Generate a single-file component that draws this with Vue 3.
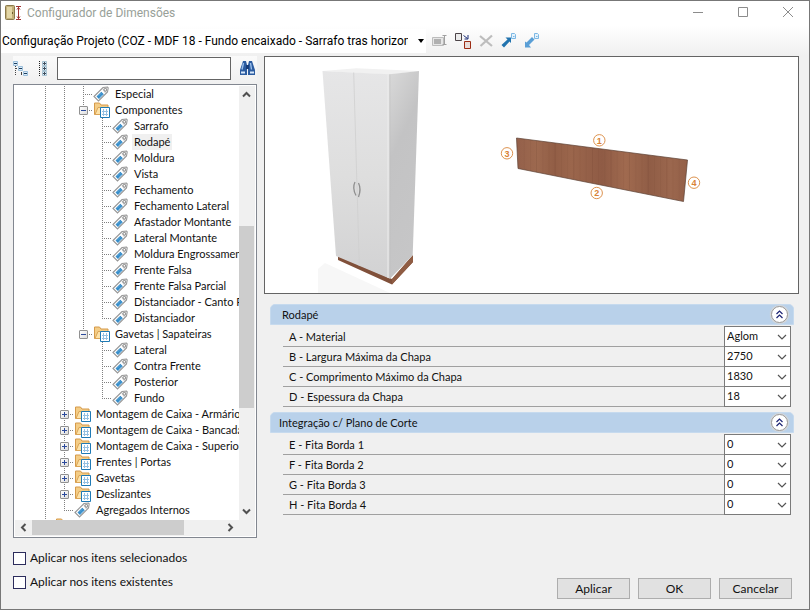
<template>
    <div class="window">
        <svg class="defs" aria-hidden="true">
            <symbol id="i-tag" viewBox="0 0 17 16">
                <path d="M1 10.500 10 1.500 14.500 1 15.200 1.800 14.500 6 5.500 15Z" fill="#fff" stroke="#969696" stroke-width="1.100" />
                <path d="M9.500 3.500 11 2.200 14 2 14 5 12 7.300Z" fill="#c9c9c9" />
                <path d="M3.500 10.500 8.300 5.700 10.800 8.200 6 13Z" fill="#2f86c4" />
                <path d="M5 10.500 8.500 7M6.300 11.500 9.600 8.300" stroke="#69b2e2" stroke-width=".8" />
                <circle cx="12.300" cy="3.800" r="1.300" fill="#fff" stroke="#777" stroke-width=".8" />
            </symbol>
            <symbol id="i-folder" viewBox="-1 0 17 16">
                <path d="M.5 12.500V1h5l1.500 2h7v9.500Z" fill="#f4cd86" stroke="#d59a4a" />
                <path d="M1 12.500 4 5.500h11l-2 7Z" fill="#fde2a8" stroke="#dba557" />
                <path d="M6.500 5.500h9v10h-9z" fill="#fff" stroke="#1f7ab5" />
                <path d="M9.500 7v7M12.500 7v7M8 9.500h6M8 12.500h6" stroke="#94c0e2" />
            </symbol>
        </svg>

        <header class="titlebar">
            <svg width="17" height="17" viewBox="0 0 17 17">
                <rect x=".5" y=".5" width="9" height="14" rx="1" fill="#c4b07a" stroke="#8b7a4c" />
                <path d="M2 2h5v11H2z" fill="#e3d6a6" />
                <path d="M7.500 7v2" stroke="#6e5c30" />
                <path d="M11 1.500h5M11 14.500h5M13.500 2v12M12 4.500 13.500 2.500 15 4.500M12 11.500l1.500 2 1.500-2" fill="none" stroke="#a03434" />
            </svg>
            <h1>Configurador de Dimensões</h1>
            <div class="win-buttons">
                <button type="button" aria-label="Minimizar"><svg width="12" height="12" viewBox="0 0 12 12"><path d="M1 5.500h10" /></svg></button>
                <button type="button" aria-label="Maximizar"><svg width="12" height="12" viewBox="0 0 12 12"><path d="M1.500.500h9v9h-9z" /></svg></button>
                <button type="button" aria-label="Fechar"><svg width="12" height="12" viewBox="0 0 12 12"><path d="m1 0 10 10M11 0 1 10" /></svg></button>
            </div>
        </header>

        <div class="toolbar">
            <div class="project">
                <select v-model="project" aria-label="Configuração">
                    <option>Configuração Projeto (COZ - MDF 18 - Fundo encaixado - Sarrafo tras horizontal)</option>
                </select>
                <svg width="7" height="4" viewBox="0 0 7 4"><path d="M0 0h6L3 4Z" /></svg>
            </div>
            <button type="button" aria-label="Renomear" disabled>
                <svg width="17" height="16" viewBox="0 0 17 16">
                    <path d="M.5 4.500h11v8H.5z" fill="#e6e6e6" stroke="#bcbcbc" />
                    <path d="M2 6h7v5H2z" fill="#b0b0b0" />
                    <path d="M10.500 2.500h4M10.500 11.500h4M12.500 3v8" stroke="#a0a0a0" />
                </svg>
            </button>
            <button type="button" aria-label="Substituir">
                <svg width="17" height="16" viewBox="0 0 17 16">
                    <path d="M.5.500h6v7h-6z" fill="#ebebeb" stroke="#4c4448" />
                    <path d="M9.500 8.500h6v7h-6z" fill="#e8dcd8" stroke="#9c2c14" />
                    <path d="M8.500 2.500l4 3M13 2v4H9.500" fill="none" stroke="#1c2f78" />
                </svg>
            </button>
            <button type="button" aria-label="Excluir" disabled>
                <svg width="17" height="16" viewBox="0 0 17 16">
                    <path d="M2 3 14 13M14 2.500 2.500 13" stroke="#bdbdbd" stroke-width="2.200" />
                </svg>
            </button>
            <button type="button" aria-label="Exportar">
                <svg width="17" height="16" viewBox="0 0 17 16">
                    <path d="M10.500.500h3l1 1v4h-4z" fill="#e4f2fc" stroke="#7db8e4" />
                    <path d="M12 3.500h1.500" stroke="#7db8e4" />
                    <path d="M4.500 4.500H10v5.500L8.500 8.500l-5.500 6L.5 12 6.500 6.500Z" fill="#2173ae" />
                </svg>
            </button>
            <button type="button" aria-label="Importar">
                <svg width="17" height="16" viewBox="0 0 17 16">
                    <path d="M10.500.500h3l1 1v4h-4z" fill="#e4f2fc" stroke="#7db8e4" />
                    <path d="M12 3.500h1.500" stroke="#7db8e4" />
                    <path d="M1 14.500V8.500l1.500 1L8 4l2.500 2.500L5 12l2 2.500Z" fill="#5a9fd6" />
                </svg>
            </button>
        </div>

        <main class="body">
            <section class="left">
                <div class="search">
                    <button type="button" aria-label="Recolher tudo">
                        <svg width="16" height="16" viewBox="0 0 16 16" fill="none">
                            <path d="M2.500 5v10M8.500 9v6" stroke="#444" stroke-dasharray="1 1" />
                            <path d="M3 7.500h3M8 12.500h3" stroke="#444" stroke-dasharray="1 1" />
                            <path d="M.5.500h4v4h-4zM5.500 5.500h4v4h-4zM10.500 10.500h4v4h-4z" fill="#dcecf8" stroke="#9cc0dc" />
                            <path d="M1 2.500h3M6 7.500h3M11 12.500h3" stroke="#1c3c5c" />
                        </svg>
                    </button>
                    <button type="button" aria-label="Expandir tudo">
                        <svg width="10" height="16" viewBox="0 0 10 16" fill="none">
                            <path d="M1.500 0v16" stroke="#222" stroke-dasharray="1 1" />
                            <path d="M4.500.500h4v4h-4zM4.500 5.500h4v4h-4zM4.500 10.500h4v4h-4z" fill="#e4f0f8" stroke="#a4c0d0" />
                            <path d="M5 2.500h3M5 7.500h3M5 12.500h3M6.500 1v3M6.500 6v3M6.500 11v3" stroke="#3c4c5c" />
                        </svg>
                    </button>
                    <input v-model="query" type="text" aria-label="Localizar" />
                    <button type="button" aria-label="Buscar">
                        <svg width="16" height="15" viewBox="0 0 16 15">
                            <path d="M3 0h3l1 4v10H0V9ZM9 0h3l3 9v5H8V4Z" fill="#2c5ca0" />
                            <path d="M6 4h3v4H6z" fill="#183c78" />
                            <path d="M3.500 2 2 8.500M10.500 2l1 6.500" stroke="#9cc0ec" stroke-width="1.400" />
                            <path d="M1 11.500h4M10 11.500h4" stroke="#d8e8fa" stroke-width="2" />
                        </svg>
                    </button>
                </div>

                <div class="tree">
                    <ul class="nodes">
                        <li v-for="node in nodes" :key="node.id" class="node">
                            <span v-for="(guide, g) in node.guides" :key="g" class="guide" :class="guide">
                                <button v-if="node.toggle && g === node.guides.length - 1" type="button" class="toggle" :aria-label="node.label">
                                    <svg width="7" height="7" viewBox="0 0 7 7">
                                        <path d="M1 3.500h5" /><path v-if="node.toggle === '+'" d="M3.500 1v5" />
                                    </svg>
                                </button>
                            </span>
                            <svg class="icon" width="17" height="16"><use :href="node.folder ? '#i-folder' : '#i-tag'" width="17" height="16" /></svg>
                            <span class="label" :class="{ selected: node.label === selected }" @click="selected = node.label">{{ node.label }}</span>
                        </li>
                    </ul>
                    <div class="vbar">
                        <button type="button" aria-label="Acima"><svg width="9" height="7" viewBox="0 0 9 7"><path d="m1 5.500 3.500-3.500L8 5.500" /></svg></button>
                        <div class="track"><span class="thumb"></span></div>
                        <button type="button" aria-label="Abaixo"><svg width="9" height="7" viewBox="0 0 9 7"><path d="m1 1.500 3.500 3.500L8 1.500" /></svg></button>
                    </div>
                    <div class="hbar">
                        <button type="button" aria-label="Esquerda"><svg width="7" height="9" viewBox="0 0 7 9"><path d="M5.500 1 2 4.500 5.500 8" /></svg></button>
                        <div class="track"><span class="thumb"></span></div>
                        <button type="button" aria-label="Direita"><svg width="7" height="9" viewBox="0 0 7 9"><path d="M1.500 1 5 4.500 1.500 8" /></svg></button>
                    </div>
                </div>
            </section>

            <section class="right">
                <div class="preview">
                    <svg viewBox="265 57 533 236" role="img" aria-label="Armário com rodapé">
                        <defs>
                            <linearGradient id="front" x1="0" y1="0" x2="0" y2="1">
                                <stop offset="0" stop-color="#e6e6e7" />
                                <stop offset=".5" stop-color="#dedede" />
                                <stop offset="1" stop-color="#d2d2d3" />
                            </linearGradient>
                            <linearGradient id="side" x1="0" y1="0" x2=".3" y2="1">
                                <stop offset="0" stop-color="#d9d9d9" />
                                <stop offset=".4" stop-color="#c3c3c4" />
                                <stop offset="1" stop-color="#c6c6c7" />
                            </linearGradient>
                            <linearGradient id="wood" x1="0" y1="0" x2="1" y2="0">
                                <stop offset="0" stop-color="#94604a" />
                                <stop offset=".12" stop-color="#9d694f" />
                                <stop offset=".22" stop-color="#925e46" />
                                <stop offset=".32" stop-color="#9b664c" />
                                <stop offset=".5" stop-color="#8f5b45" />
                                <stop offset=".64" stop-color="#a06a4f" />
                                <stop offset=".78" stop-color="#905d46" />
                                <stop offset=".9" stop-color="#9b674e" />
                                <stop offset="1" stop-color="#946048" />
                            </linearGradient>
                        </defs>
                        <path d="m318 269 7-6 65 30h-72z" fill="#f7f7f7" />
                        <path d="m338 256 54 23 21-24v7l-21 22.500L338 260z" fill="#80503a" />
                        <path d="m392 279 21-24v7l-21 22.500z" fill="#8f5c43" />
                        <path d="m322.500 71 34-2.700 62.500 2.700-29.500 3.500z" fill="#f1f1f1" />
                        <path d="M322.500 71 389.500 74.300 390 278.700 336 256z" fill="url(#front)" />
                        <path d="M389.500 74.300 419 71 412.700 255.300 390 278.700z" fill="url(#side)" />
                        <path d="m353.700 72.500 5.600 193.500" stroke="#cfcfcf" stroke-width=".8" />
                        <path d="M388 74.300V278" stroke="#ececec" />
                        <path d="M389.800 74.300V278" stroke="#bdbdbd" stroke-width=".7" />
                        <path d="M355 182q-3 6 1 13.500M358.500 183q3 6 0 14" fill="none" stroke="#8f8f8f" stroke-width="1.300" />
                        <path d="M516.500 138 687.500 160 683.500 201.500 518 168.500z" fill="url(#wood)" stroke="#5c4034" stroke-width=".7" />
                        <path
                            v-for="n in 26" :key="n"
                            :d="`M${518 + n * 6.2} ${138.8 + n * 0.8}v${30 + n * 0.36}`"
                            stroke="#5f3524" stroke-width=".8" :opacity="n % 3 ? 0.08 : 0.18"
                        />
                        <g v-for="edge in edges" :key="edge.n">
                            <circle :cx="edge.x" :cy="edge.y" r="5.700" fill="#fff" stroke="#dd9350" />
                            <text :x="edge.x" :y="edge.y + 3.2" class="edge">{{ edge.n }}</text>
                        </g>
                    </svg>
                </div>

                <div class="groups">
                    <section v-for="group in groups" :key="group.title" class="group">
                        <h2 :class="{ main: group.main }">
                            {{ group.title }}
                            <button type="button" class="collapse" :aria-label="group.title">
                                <svg width="9" height="9" viewBox="0 0 9 9"><path d="m1.500 4 3-3 3 3M1.500 8l3-3 3 3" /></svg>
                            </button>
                        </h2>
                        <div v-for="field in group.fields" :key="field.id" class="field">
                            <label :for="field.id">{{ field.label }}</label>
                            <div class="combo">
                                <select :id="field.id" v-model="field.value">
                                    <option>{{ field.value }}</option>
                                </select>
                                <svg width="10" height="6" viewBox="0 0 10 6"><path d="m1 1 4 4 4-4" /></svg>
                            </div>
                        </div>
                    </section>
                </div>
            </section>
        </main>

        <footer class="footer">
            <div class="checks">
                <label><input v-model="applySelected" type="checkbox" />Aplicar nos itens selecionados</label>
                <label><input v-model="applyExisting" type="checkbox" />Aplicar nos itens existentes</label>
            </div>
            <div class="actions">
                <button type="button">Aplicar</button>
                <button type="button">OK</button>
                <button type="button">Cancelar</button>
            </div>
        </footer>
    </div>
</template>

<script setup>
import { ref, reactive } from "vue";

const project = ref("Configuração Projeto (COZ - MDF 18 - Fundo encaixado - Sarrafo tras horizontal)");
const query = ref("");
const selected = ref("Rodapé");
const applySelected = ref(false);
const applyExisting = ref(false);

const leaf = (label, guides) => ({ label, guides });
const folder = (label, guides, toggle) => ({ label, guides, toggle, folder: true });

// guides: v = vertical line, t = tee, e = elbow, n = empty
const nodes = [
    leaf("Especial", "vvt"),
    folder("Componentes", "vvt", "-"),
    leaf("Sarrafo", "vvvt"),
    leaf("Rodapé", "vvvt"),
    leaf("Moldura", "vvvt"),
    leaf("Vista", "vvvt"),
    leaf("Fechamento", "vvvt"),
    leaf("Fechamento Lateral", "vvvt"),
    leaf("Afastador Montante", "vvvt"),
    leaf("Lateral Montante", "vvvt"),
    leaf("Moldura Engrossamento", "vvvt"),
    leaf("Frente Falsa", "vvvt"),
    leaf("Frente Falsa Parcial", "vvvt"),
    leaf("Distanciador - Canto Reto", "vvvt"),
    leaf("Distanciador", "vvve"),
    folder("Gavetas | Sapateiras", "vve", "-"),
    leaf("Lateral", "vvnt"),
    leaf("Contra Frente", "vvnt"),
    leaf("Posterior", "vvnt"),
    leaf("Fundo", "vvne"),
    folder("Montagem de Caixa - Armários", "vt", "+"),
    folder("Montagem de Caixa - Bancadas", "vt", "+"),
    folder("Montagem de Caixa - Superior", "vt", "+"),
    folder("Frentes | Portas", "vt", "+"),
    folder("Gavetas", "vt", "+"),
    folder("Deslizantes", "vt", "+"),
    leaf("Agregados Internos", "ve"),
    folder("", "t"),
].map((node, id) => ({ ...node, id, guides: node.guides.split("") }));

const edges = [
    { n: 1, x: 599.3, y: 140.3 },
    { n: 2, x: 596.7, y: 193 },
    { n: 3, x: 507, y: 153.3 },
    { n: 4, x: 694, y: 182.7 },
];

const groups = reactive([
    {
        title: "Rodapé",
        main: true,
        fields: [
            { id: "a", label: "A - Material", value: "Aglom" },
            { id: "b", label: "B - Largura Máxima da Chapa", value: "2750" },
            { id: "c", label: "C - Comprimento Máximo da Chapa", value: "1830" },
            { id: "d", label: "D - Espessura da Chapa", value: "18" },
        ],
    },
    {
        title: "Integração c/ Plano de Corte",
        fields: [
            { id: "e", label: "E - Fita Borda 1", value: "0" },
            { id: "f", label: "F - Fita Borda 2", value: "0" },
            { id: "g", label: "G - Fita Borda 3", value: "0" },
            { id: "h", label: "H - Fita Borda 4", value: "0" },
        ],
    },
]);
</script>

<style>
body {
    margin: 0;
}
</style>

<style scoped>
.window {
    display: flex;
    flex-direction: column;
    box-sizing: border-box;
    height: 100vh;
    border: 1px solid #777;
    background: #f0f0f0;
    color: #111;
    font: 11px/16px "Lato", "Liberation Sans", sans-serif;
}

.window * {
    box-sizing: border-box;
}

.defs {
    position: absolute;
    width: 0;
    height: 0;
}

button,
input,
select {
    margin: 0;
    padding: 0;
    border: 0;
    background: none;
    color: inherit;
    font: inherit;
}

button {
    display: flex;
    align-items: center;
    justify-content: center;
}

svg {
    display: block;
    flex: none;
}

select {
    appearance: none;
    width: 100%;
}

.titlebar {
    display: flex;
    align-items: center;
    gap: 5px;
    height: 24px;
    padding-left: 4px;
    background: #fff;
}

.titlebar h1 {
    flex: 1;
    margin: 0;
    color: #98a098;
    font: 12px/16px "Roboto", "Open Sans", sans-serif;
}

.win-buttons {
    display: flex;
}

.win-buttons button {
    width: 45px;
    height: 24px;
    padding-left: 3px;
}

.win-buttons path {
    fill: none;
    stroke: #8c8c8c;
}

.toolbar {
    display: flex;
    align-items: center;
    gap: 6px;
    height: 31px;
    background: linear-gradient(#fff, #f0f0f0);
}

.project {
    position: relative;
    width: 425px;
    height: 24px;
    padding-right: 18px;
    background: #fff;
}

.project select {
    height: 24px;
    padding-left: 1px;
    overflow: hidden;
    font: 12px/24px "Roboto", "Open Sans", sans-serif;
    color: #000;
    text-overflow: clip;
}

.project svg {
    position: absolute;
    top: 10px;
    right: 1px;
}

.body {
    display: flex;
    flex: 1;
    min-height: 0;
    padding: 0 10px 0 12px;
    gap: 7px;
}

.left {
    display: flex;
    flex-direction: column;
    width: 244px;
}

.search {
    display: flex;
    align-items: center;
    gap: 9px;
    height: 28px;
    padding: 0 1px 3px 0;
    background: linear-gradient(#fafafa, #f0f0f0);
}

.search input {
    flex: 1;
    min-width: 0;
    height: 23px;
    padding: 0 4px;
    border: 1px solid #646464;
    background: #fff;
}

.tree {
    display: grid;
    flex: 1;
    grid-template-columns: minmax(0, 1fr) 16px;
    grid-template-rows: minmax(0, 1fr) 16px;
    min-height: 0;
    padding: 1px;
    border: 1px solid #828790;
    background: #f0f0f0;
    box-shadow: inset 0 0 0 1px #fff;
}

.nodes {
    margin: 0;
    padding: 0 0 0 21px;
    overflow: hidden;
    background: #fff;
    list-style: none;
}

.node {
    display: flex;
    height: 16px;
    white-space: nowrap;
}

.guide {
    --v: repeating-linear-gradient(#808080 0 1px, transparent 1px 2px);
    --h: repeating-linear-gradient(to right, #808080 0 1px, transparent 1px 2px);
    display: flex;
    flex: none;
    align-items: flex-start;
    justify-content: center;
    width: 19px;
}

.guide.v {
    background: var(--v) 9px 0 / 1px 16px no-repeat;
}

.guide.t {
    background: var(--v) 9px 0 / 1px 16px no-repeat, var(--h) 9px 8px / 10px 1px no-repeat;
}

.guide.e {
    background: var(--v) 9px 0 / 1px 9px no-repeat, var(--h) 9px 8px / 10px 1px no-repeat;
}

.toggle {
    width: 9px;
    height: 9px;
    margin-top: 4px;
    border: 1px solid #919191;
    border-radius: 1px;
    background: linear-gradient(135deg, #fff, #ddd);
}

.toggle path {
    stroke: #2b4a9c;
}

.icon {
    margin-right: 3px;
}

.label {
    padding: 0 2px;
}

.label.selected {
    background: #f0f0f0;
}

.vbar,
.hbar,
.track {
    display: flex;
}

.vbar,
.vbar .track {
    flex-direction: column;
}

.vbar {
    padding-right: 1px;
}

.hbar {
    padding-bottom: 1px;
}

.track {
    flex: 1;
}

.vbar button {
    height: 17px;
}

.hbar button {
    width: 17px;
}

.vbar path,
.hbar path {
    fill: none;
    stroke: #505050;
    stroke-width: 2;
}

.thumb {
    background: #cdcdcd;
}

.vbar .track::before {
    flex: 123;
    content: "";
}

.vbar .thumb {
    flex: 183;
}

.vbar .track::after {
    flex: 95;
    content: "";
}

.hbar .thumb {
    flex: 4;
}

.hbar .track::after {
    flex: 1;
    content: "";
}

.right {
    display: flex;
    flex: 1;
    flex-direction: column;
    min-width: 0;
}

.preview {
    border: 1px solid #646464;
    background: #fff;
}

.preview svg {
    width: 100%;
}

.edge {
    fill: #d98236;
    font: bold 9px "Liberation Sans", sans-serif;
    text-anchor: middle;
}

.groups {
    display: flex;
    flex-direction: column;
    gap: 5px;
    padding: 10px 5px 0 6px;
}

.group h2 {
    display: flex;
    align-items: center;
    justify-content: space-between;
    height: 21px;
    margin: 0 0 1px;
    padding: 0 5px 0 8px;
    border: 1px solid #c6daee;
    border-radius: 5px 5px 0 0;
    background: #b9d1ea;
    font: inherit;
}

.group h2.main {
    padding-left: 11px;
}

.collapse {
    width: 17px;
    height: 17px;
    border: 1px solid #999;
    border-radius: 50%;
    background: #fff;
    box-shadow: 0 0 1px 1px #d8d8d8;
}

.collapse path {
    fill: none;
    stroke: #1c2474;
    stroke-width: 1.2;
}

.field {
    display: flex;
    height: 20px;
    margin: 0 3px 0 13px;
}

.field:last-child {
    height: 21px;
}

.field label {
    flex: 1;
    height: 21px;
    padding: 3px 6px 1px;
    border-bottom: 1px solid #a0a0a0;
}

.combo {
    position: relative;
    width: 67px;
    height: 21px;
    border: 1px solid #7a7a7a;
    background: #fff;
}

.combo select {
    height: 19px;
    padding: 0 0 1px 2px;
}

.combo svg {
    position: absolute;
    top: 7px;
    right: 3px;
}

.combo path {
    fill: none;
    stroke: #555;
    stroke-width: 1.2;
}

.footer {
    display: flex;
    justify-content: space-between;
    padding: 12px 17px 10px 12px;
}

.checks {
    display: flex;
    flex-direction: column;
    gap: 8px;
    padding-bottom: 9px;
    font-size: 12px;
}

.checks label {
    display: flex;
    align-items: center;
    gap: 4px;
}

.checks input {
    appearance: none;
    width: 13px;
    height: 13px;
    border: 1px solid #2c2c5c;
    background: #fff;
}

.checks input:checked {
    background: #2c2c5c;
}

.actions {
    display: flex;
    align-items: flex-end;
    gap: 8px;
    font-size: 12px;
}

.actions button {
    width: 73px;
    height: 21px;
    border: 1px solid #adadad;
    background: #e1e1e1;
}
</style>
